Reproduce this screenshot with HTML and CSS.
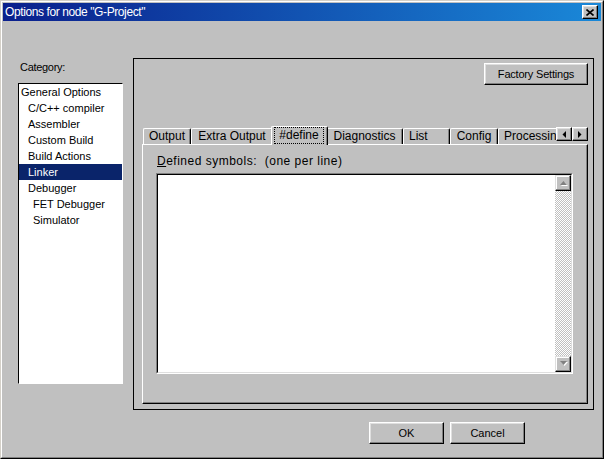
FILE: index.html
```html
<!DOCTYPE html>
<html>
<head>
    <meta charset="utf-8">
    <title>Options for node "G-Project"</title>
    <link rel="stylesheet" href="styles.css">
</head>
<body>
    <div class="window">
        <div class="window-inner">
            <!-- Title bar -->
            <div class="titlebar">
                <span class="title">Options for node "G-Project"</span>
                <span class="close-btn">
                    <svg width="8" height="7" viewBox="0 0 8 7">
                        <path d="M0.5 0.5 L7.5 6.5 M7.5 0.5 L0.5 6.5" stroke="#000" stroke-width="1.6" fill="none"/>
                    </svg>
                </span>
            </div>

            <div class="content">
                <div class="main">
                    <!-- Category list -->
                    <div class="category">
                        <div class="category-label">Category:</div>
                        <ul class="category-list">
                            <li class="level-1">General Options</li>
                            <li class="level-2">C/C++ compiler</li>
                            <li class="level-2">Assembler</li>
                            <li class="level-2">Custom Build</li>
                            <li class="level-2">Build Actions</li>
                            <li class="level-2 selected">Linker</li>
                            <li class="level-2">Debugger</li>
                            <li class="level-3">FET Debugger</li>
                            <li class="level-3">Simulator</li>
                        </ul>
                    </div>

                    <!-- Options area -->
                    <div class="options-box">
                        <div class="box-top">
                            <button class="btn btn-factory">Factory Settings</button>
                        </div>

                        <div class="tab-strip">
                            <div class="tabs">
                                <div class="tab tab-output">Output</div>
                                <div class="tab tab-extra">Extra Output</div>
                                <div class="tab tab-define active"><span class="focus">#define</span></div>
                                <div class="tab tab-diag">Diagnostics</div>
                                <div class="tab tab-list">List</div>
                                <div class="tab tab-config">Config</div>
                                <div class="tab tab-proc">Processing</div>
                            </div>
                            <div class="tab-arrows">
                                <span class="arrow-btn">
                                    <svg width="4" height="7" viewBox="0 0 4 7"><polygon points="4,0 4,7 0.5,3.5" fill="#000"/></svg>
                                </span>
                                <span class="arrow-btn">
                                    <svg width="4" height="7" viewBox="0 0 4 7"><polygon points="0,0 0,7 3.5,3.5" fill="#000"/></svg>
                                </span>
                            </div>
                        </div>

                        <div class="tab-page">
                            <label class="field-label" for="symbols"><u>D</u>efined symbols:&nbsp; (one per line)</label>
                            <div class="edit">
                                <div class="edit-inner">
                                    <div class="edit-text" id="symbols"></div>
                                    <div class="vscroll">
                                        <span class="scroll-btn">
                                            <svg width="9" height="6" viewBox="0 0 9 6">
                                                <polygon points="4.5,1 8,5 1,5" fill="#fff" transform="translate(1,1)"/>
                                                <polygon points="4.5,1 8,5 1,5" fill="#808080"/>
                                            </svg>
                                        </span>
                                        <span class="scroll-track"></span>
                                        <span class="scroll-btn">
                                            <svg width="9" height="6" viewBox="0 0 9 6">
                                                <polygon points="1,0 8,0 4.5,4" fill="#fff" transform="translate(1,1)"/>
                                                <polygon points="1,0 8,0 4.5,4" fill="#808080"/>
                                            </svg>
                                        </span>
                                    </div>
                                </div>
                            </div>
                        </div>
                    </div>
                </div>

                <div class="buttons">
                    <button class="btn btn-dialog">OK</button>
                    <button class="btn btn-dialog">Cancel</button>
                </div>
            </div>
        </div>
    </div>
</body>
</html>
```

FILE: styles.css
```css
* {
    box-sizing: border-box;
}
html,
body {
    margin: 0;
    padding: 0;
}
body {
    width: 604px;
    height: 459px;
    overflow: hidden;
    background: #c0c0c0;
    font-family: "Liberation Sans", Arial, sans-serif;
    font-size: 11px;
    color: #000;
}
.window {
    width: 604px;
    height: 459px;
    background: #c0c0c0;
    border: 1px solid;
    border-color: #d4d0c8 #000 #000 #d4d0c8;
}
.window-inner {
    height: 100%;
    padding: 1px;
    border: 1px solid;
    border-color: #fff #808080 #808080 #fff;
    display: flex;
    flex-direction: column;
}

/* Title bar */
.titlebar {
    height: 18px;
    flex: none;
    display: flex;
    align-items: center;
    justify-content: space-between;
    padding: 0 3px 0 2px;
    background: linear-gradient(to right, #0a1f8c, #1a88d8);
}
.title {
    color: #fff;
    font-size: 12px;
    letter-spacing: -0.4px;
    white-space: nowrap;
}
.close-btn {
    width: 16px;
    height: 14px;
    display: flex;
    align-items: center;
    justify-content: center;
    background: #c0c0c0;
    border: 1px solid;
    border-color: #fff #000 #000 #fff;
    box-shadow: inset -1px -1px 0 #808080, inset 1px 1px 0 #dfdfdf;
}

.content {
    flex: 1;
    display: flex;
    flex-direction: column;
}
.main {
    display: flex;
    align-items: flex-start;
}

/* Category list */
.category {
    width: 105px;
    margin: 40px 0 0 15px;
}
.category-label {
    height: 13px;
    line-height: 13px;
    padding-left: 2px;
    letter-spacing: -0.3px;
}
.category-list {
    list-style: none;
    margin: 9px 0 0;
    padding: 0;
    height: 301px;
    background: #fff;
    border: 1px solid;
    border-color: #000 #fff #fff #000;
}
.category-list li {
    height: 16px;
    line-height: 16px;
    white-space: nowrap;
}
.level-1 {
    padding-left: 2px;
}
.level-2 {
    padding-left: 9px;
}
.level-3 {
    padding-left: 14px;
}
.category-list .selected {
    background: #0a246a;
    color: #fff;
}

/* Options box */
.options-box {
    width: 461px;
    height: 352px;
    margin: 37px 0 0 10px;
    padding: 4px 5px 5px 8px;
    border: 1px solid #000;
    display: flex;
    flex-direction: column;
}
.box-top {
    height: 22px;
    margin-bottom: 41px;
    display: flex;
    justify-content: flex-end;
}

.btn {
    height: 22px;
    padding: 0;
    background: #c0c0c0;
    border: 1px solid;
    border-color: #fff #000 #000 #fff;
    box-shadow: inset -1px -1px 0 #808080, inset 1px 1px 0 #dfdfdf;
    font-family: "Liberation Sans", Arial, sans-serif;
    font-size: 11px;
    color: #000;
}
.btn-factory {
    width: 104px;
    letter-spacing: -0.2px;
}
.btn-dialog {
    width: 75px;
}

/* Tabs */
.tab-strip {
    height: 19px;
    margin-bottom: -1px;
    display: flex;
    position: relative;
    z-index: 1;
}
.tabs {
    flex: 1;
    display: flex;
    align-items: flex-end;
    overflow: hidden;
    padding-left: 1px;
}
.tab {
    flex: none;
    height: 16px;
    margin-bottom: 1px;
    background: #c0c0c0;
    border-top: 1px solid #fff;
    border-left: 1px solid #fff;
    border-right: 1px solid #000;
    border-radius: 2px 2px 0 0;
    box-shadow: inset -1px 0 0 #808080;
    font-size: 12px;
    line-height: 14px;
    text-align: center;
    white-space: nowrap;
}
.tab-output {
    width: 48px;
}
.tab-extra {
    width: 82px;
}
.tab-define {
    width: 57px;
}
.tab-diag {
    width: 77px;
}
.tab-list {
    width: 47px;
    text-align: left;
    padding-left: 5px;
}
.tab-config {
    width: 48px;
}
.tab-proc {
    width: 70px;
    text-align: left;
    padding-left: 5px;
}
.tab.active {
    height: 19px;
    margin: 0 -2px;
    position: relative;
    z-index: 1;
    border-bottom: none;
    box-shadow: inset -1px 0 0 #808080;
}
.focus {
    display: block;
    height: 17px;
    margin: 0 3px 0 2px;
    line-height: 15px;
    border: 1px dotted #000;
}
.tab-arrows {
    display: flex;
    align-self: flex-start;
    margin-top: 1px;
}
.arrow-btn {
    width: 16px;
    height: 14px;
    display: flex;
    align-items: center;
    justify-content: center;
    background: #c0c0c0;
    border: 1px solid;
    border-color: #fff #000 #000 #fff;
    box-shadow: inset -1px -1px 0 #808080, inset 1px 1px 0 #dfdfdf;
}

/* Tab page */
.tab-page {
    height: 260px;
    padding: 9px 0 0 13px;
    border: 1px solid;
    border-color: #fff #000 #000 #fff;
    box-shadow: inset -1px -1px 0 #808080;
}
.field-label {
    display: block;
    margin-left: 1px;
    font-size: 12px;
    line-height: 14px;
    letter-spacing: 0.5px;
    white-space: nowrap;
}
.edit {
    width: 417px;
    height: 201px;
    margin-top: 5px;
    border: 1px solid;
    border-color: #808080 #fff #fff #808080;
}
.edit-inner {
    height: 100%;
    display: flex;
    border: 1px solid;
    border-color: #000 #dfdfdf #dfdfdf #000;
}
.edit-text {
    flex: 1;
    background: #fff;
}
.vscroll {
    width: 16px;
    display: flex;
    flex-direction: column;
}
.scroll-btn {
    height: 16px;
    flex: none;
    display: flex;
    align-items: center;
    justify-content: center;
    background: #c0c0c0;
    border: 1px solid;
    border-color: #dfdfdf #000 #000 #dfdfdf;
    box-shadow: inset -1px -1px 0 #808080, inset 1px 1px 0 #fff;
}
.scroll-track {
    flex: 1;
    background-color: #fff;
    background-image: conic-gradient(#c0c0c0 0 25%, #fff 0 50%, #c0c0c0 0 75%, #fff 0);
    background-size: 2px 2px;
}

/* Dialog buttons */
.buttons {
    display: flex;
    justify-content: flex-end;
    gap: 6px;
    margin-top: 12px;
    padding-right: 76px;
}
```
